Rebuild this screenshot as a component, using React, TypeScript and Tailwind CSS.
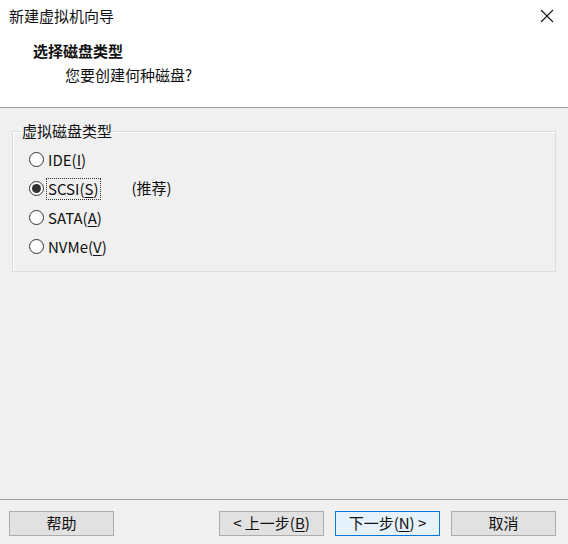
import React, { useState } from 'react';

const FONT = '"Noto Sans CJK SC", "Noto Sans", "Liberation Sans", sans-serif';

type DiskType = 'ide' | 'scsi' | 'sata' | 'nvme';

const Radio = ({ checked }: { checked: boolean }) => (
    <span className="w-[15px] h-[15px] rounded-full border border-[#333333] bg-white flex items-center justify-center shrink-0">
        {checked && <span className="w-[9px] h-[9px] rounded-full bg-[#333333]" />}
    </span>
);

const Btn = ({ children, primary = false }: { children: React.ReactNode; primary?: boolean }) => (
    <button
        type="button"
        className={
            primary
                ? 'w-[105px] h-[25px] border border-[#0078d7] bg-[#e5f1fb] text-[15px] text-[#111] flex items-center justify-center'
                : 'w-[105px] h-[25px] border border-[#adadad] bg-[#e1e1e1] text-[15px] text-[#111] flex items-center justify-center'
        }
    >
        {children}
    </button>
);

export default function App() {
    const [disk, setDisk] = useState<DiskType>('scsi');

    const options: { id: DiskType; label: string; key: string; tail: string }[] = [
        { id: 'ide', label: 'IDE(', key: 'I', tail: ')' },
        { id: 'scsi', label: 'SCSI(', key: 'S', tail: ')' },
        { id: 'sata', label: 'SATA(', key: 'A', tail: ')' },
        { id: 'nvme', label: 'NVMe(', key: 'V', tail: ')' },
    ];

    return (
        <div className="w-[568px] h-[544px] bg-[#f0f0f0] flex flex-col text-[#111]" style={{ fontFamily: FONT }}>
            {/* header */}
            <div className="h-[108px] bg-white border-b border-[#a0a0a0] flex flex-col shrink-0">
                <div className="h-[32px] flex items-center justify-between pl-[9px] pr-[14px]">
                    <span className="text-[15px]">新建虚拟机向导</span>
                    <svg width="14" height="14" viewBox="0 0 14 14">
                        <path d="M1 1L13 13M13 1L1 13" stroke="#111" strokeWidth="1.1" />
                    </svg>
                </div>
                <div className="pl-[33px] mt-[9px] text-[15px] font-bold leading-[20px]">选择磁盘类型</div>
                <div className="pl-[65px] mt-[4px] text-[15px] leading-[20px]">您要创建何种磁盘?</div>
            </div>

            {/* body */}
            <div className="flex-1 px-[12px] pt-[13px]">
                <fieldset className="w-[544px] border border-[#dcdcdc] shadow-[inset_1px_1px_0_#ffffff] pl-[16px] pt-[4px] pb-[10px]">
                    <legend className="-ml-[8px] px-[1px] text-[15px] leading-[20px]">虚拟磁盘类型</legend>
                    {options.map((o) => (
                        <div key={o.id} className="h-[29px] flex items-center" onClick={() => setDisk(o.id)}>
                            <Radio checked={disk === o.id} />
                            <span
                                className={
                                    o.id === 'scsi'
                                        ? 'ml-[3px] px-[1px] text-[15px] leading-[20px] outline-1 outline-dotted outline-[#333]'
                                        : 'ml-[3px] px-[1px] text-[15px] leading-[20px]'
                                }
                            >
                                {o.label}
                                <span className="underline underline-offset-2">{o.key}</span>
                                {o.tail}
                            </span>
                            {o.id === 'scsi' && <span className="ml-[32px] text-[15px]">(推荐)</span>}
                        </div>
                    ))}
                </fieldset>
            </div>

            {/* footer */}
            <div className="h-[45px] border-t border-[#a0a0a0] flex items-start pt-[11px] pl-[9px] shrink-0">
                <Btn>帮助</Btn>
                <div className="ml-[105px] flex gap-[11px]">
                    <Btn>
                        &lt; 上一步(<span className="underline underline-offset-2">B</span>)
                    </Btn>
                    <Btn primary>
                        下一步(<span className="underline underline-offset-2">N</span>) &gt;
                    </Btn>
                    <Btn>取消</Btn>
                </div>
            </div>
        </div>
    );
}
